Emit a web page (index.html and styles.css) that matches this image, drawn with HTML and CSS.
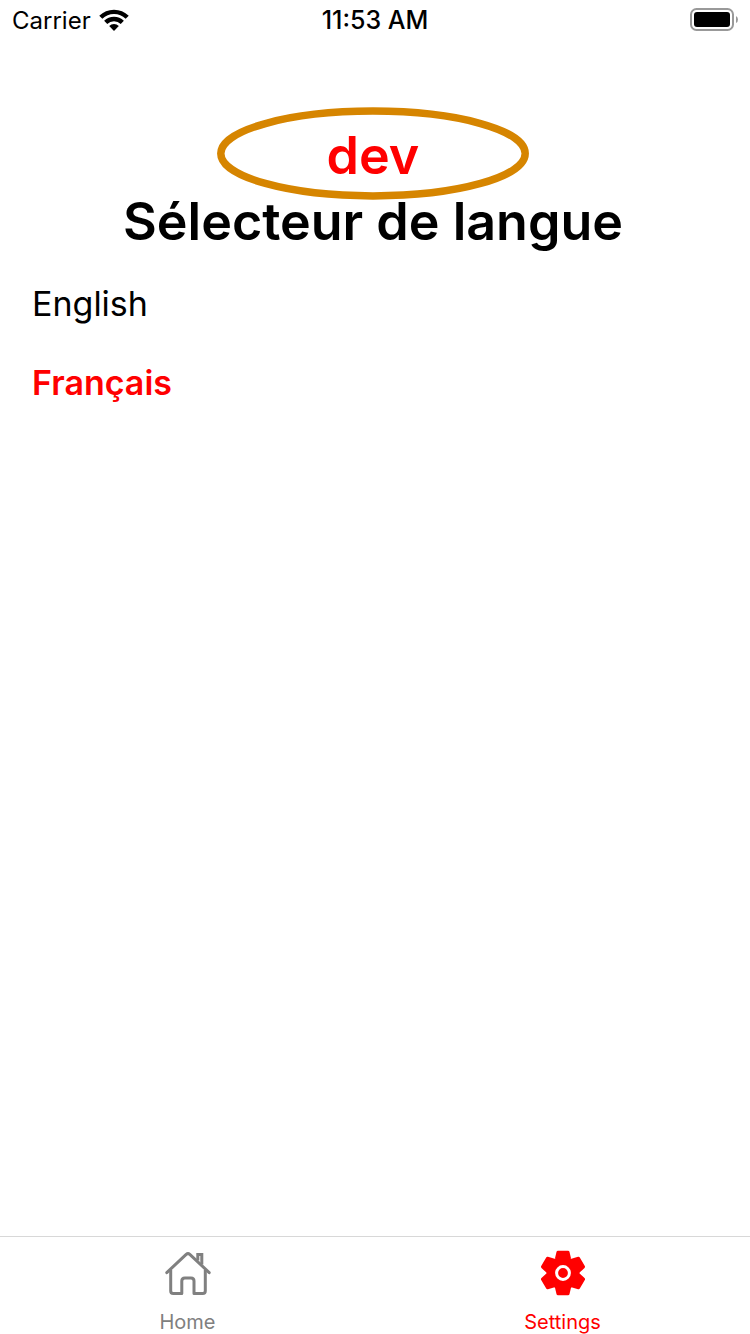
FILE: index.html
```html
<!DOCTYPE html>
<html lang="fr">
<head>
<meta charset="utf-8">
<meta name="viewport" content="width=device-width, initial-scale=1">
<title>Sélecteur de langue</title>
<link rel="stylesheet" href="styles.css">
</head>
<body>
<header class="status">
  <div class="carrier">
    <span>Carrier</span>
    <svg class="wifi" viewBox="0 0 30 22" aria-hidden="true">
      <g fill="none" stroke="#000" stroke-width="4.4">
        <path d="M1.8 8.3A18.8 18.8 0 0 1 28.2 8.3"/>
        <path d="M6.7 13.4A11.7 11.7 0 0 1 23.3 13.4"/>
      </g>
      <path d="M10.2 17A6.8 6.8 0 0 1 19.8 17L15 22Z"/>
    </svg>
  </div>
  <time class="clock">11:53 AM</time>
  <svg class="battery" viewBox="0 0 48 24" aria-hidden="true">
    <rect x="1" y="1" width="42" height="21" rx="5.5" fill="none" stroke="#999" stroke-width="2"/>
    <rect x="4" y="4" width="36" height="15" rx="3"/>
    <path d="M46 8Q48 9 48 11.5T46 15Z" fill="#999"/>
  </svg>
</header>
<main class="content">
  <div class="badge">
    <svg class="ring" viewBox="0 0 312 93" aria-hidden="true"><ellipse cx="156" cy="46.5" rx="152.2" ry="42.4" fill="none" stroke="#d68500" stroke-width="7.5"/></svg>
    <span class="env">dev</span>
  </div>
  <h1 class="title">Sélecteur de langue</h1>
  <div class="languages">
    <button class="language" type="button">English</button>
    <button class="language selected" type="button" aria-pressed="true">Français</button>
  </div>
</main>
<nav class="tabs">
  <a class="tab" href="#home">
    <svg class="icon" viewBox="0 0 48 48" aria-hidden="true">
      <g fill="none" stroke="#808080" stroke-width="3" stroke-linejoin="round">
        <path d="M2.8 23.6L22.2 5.4Q24 3.8 25.8 5.4L45.2 23.6" stroke-linecap="round"/>
        <path d="M6.7 21V42Q6.7 44.6 9.3 44.6H17.8V32Q17.8 29 20.8 29H27Q30 29 30 32V44.6H38.7Q41.3 44.6 41.3 42V21"/>
        <path d="M33.8 11.5V5.5H37.8V15.5" stroke-linejoin="miter"/>
      </g>
    </svg>
    <span>Home</span>
  </a>
  <a class="tab active" href="#settings" aria-current="page">
    <svg class="icon" viewBox="0 0 48 48" aria-hidden="true">
      <path fill="#f00" stroke="#f00" stroke-width="3" stroke-linejoin="round" d="M19 3.2H29L30.6 9.8Q31 11.3 32.8 11.2L39.5 9.2L44.5 17.8L39.6 22.5Q38.3 24 39.6 25.5L44.5 30.2L39.5 38.8L32.8 36.8Q31 36.7 30.6 38.2L29 44.8H19L17.4 38.2Q17 36.7 15.2 36.8L8.5 38.8L3.5 30.2L8.4 25.5Q9.7 24 8.4 22.5L3.5 17.8L8.5 9.2L15.2 11.2Q17 11.3 17.4 9.8Z"/>
      <circle cx="24" cy="24" r="6.4" fill="none" stroke="#fff" stroke-width="3"/>
    </svg>
    <span>Settings</span>
  </a>
</nav>
</body>
</html>
```
FILE: styles.css
```css
* { box-sizing: border-box; }
body {
  margin: 0;
  min-height: 100vh;
  display: flex;
  flex-direction: column;
  background: #fff;
  color: #000;
  font-family: Inter, "Liberation Sans", sans-serif;
}
.status {
  display: grid;
  grid-template-columns: 1fr auto 1fr;
  align-items: center;
  height: 40px;
  padding: 0 12px;
  font-size: 24px;
}
.carrier { display: flex; align-items: center; gap: 8px; }
.wifi { width: 30px; height: 22px; }
.clock { font-size: 25px; font-weight: 500; }
.battery { width: 48px; height: 24px; justify-self: end; }
.content {
  flex: 1;
  padding: 67px 4px 0 0;
}
.badge {
  display: grid;
  place-items: center;
  height: 93px;
}
.ring, .env { grid-area: 1 / 1; }
.ring { width: 312px; height: 93px; }
.env {
  color: #f00;
  font-size: 52px;
  font-weight: 600;
  line-height: 64px;
  padding-top: 4px;
}
.title {
  margin: 0;
  font-size: 52px;
  font-weight: 600;
  line-height: 64px;
  margin-top: -10px;
  text-align: center;
}
.languages {
  display: flex;
  flex-direction: column;
  align-items: flex-start;
  gap: 35px;
  padding: 28px 32px;
}
.language {
  border: 0;
  padding: 0;
  background: none;
  color: #000;
  font: 400 34px/44px Inter, "Liberation Sans", sans-serif;
}
.language.selected { color: #f00; font-weight: 600; }
.tabs {
  display: flex;
  height: 98px;
  border-top: 1px solid #d8d8d8;
}
.tab {
  flex: 1;
  display: flex;
  flex-direction: column;
  align-items: center;
  gap: 13px;
  padding-top: 12px;
  color: #808080;
  font-size: 20px;
  line-height: 24px;
  text-decoration: none;
}
.tab.active { color: #f00; }
.icon { width: 48px; height: 48px; }
```
